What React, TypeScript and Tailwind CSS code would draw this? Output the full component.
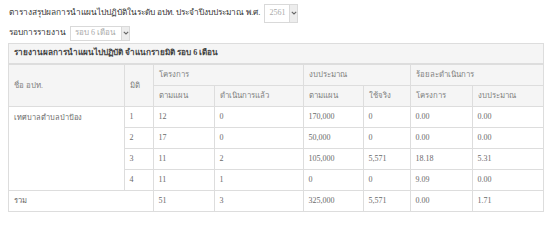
const rows = [
  ['1', '12', '0', '170,000', '0', '0.00', '0.00'],
  ['2', '17', '0', '50,000', '0', '0.00', '0.00'],
  ['3', '11', '2', '105,000', '5,571', '18.18', '5.31'],
  ['4', '11', '1', '0', '0', '9.09', '0.00'],
]

function Chevron() {
  return (
    <svg width="6" height="4" viewBox="0 0 6 4" className="block">
      <path d="M0.8 0.8 L3 3 L5.2 0.8" fill="none" stroke="#666" strokeWidth="1.1" />
    </svg>
  )
}

function Select({ label, width, height }: { label: string; width: string; height: string }) {
  return (
    <div className={`flex border border-[#d9d9d9] bg-white ${width} ${height}`}>
      <span className="flex-1 min-w-0 flex items-center pl-[4px] text-[#aaa] whitespace-nowrap">{label}</span>
      <span className="w-[8px] shrink-0 flex items-center justify-center bg-[#ededed] border-l border-[#d9d9d9]">
        <Chevron />
      </span>
    </div>
  )
}

const th = 'border border-[#dddddd] px-[5px] h-[21px] text-left font-normal text-[#808080] align-middle whitespace-nowrap'
const td = 'border border-[#dddddd] px-[5px] h-[21px] text-left text-[#6a6a6a] align-middle whitespace-nowrap'

export default function App() {
  return (
    <div className="w-[550px] h-[245px] bg-white px-2 pt-[3px] text-[8px] leading-none text-[#333] font-['Liberation_Serif',Tahoma,serif]">
      <div className="flex items-center gap-[4px] h-[20px]">
        <span className="text-[8.3px] pl-px">ตารางสรุปผลการนำแผนไปปฏิบัติในระดับ อปท. ประจำปีงบประมาณ พ.ศ.</span>
        <Select label="2561" width="w-[34px]" height="h-[19px]" />
      </div>
      <div className="flex items-center gap-[4px] h-[16px] mt-[2px]">
        <span className="text-[8.3px] pl-px">รอบการรายงาน</span>
        <Select label="รอบ 6 เดือน" width="w-[60px]" height="h-[15px]" />
      </div>
      <div className="mt-[2px] w-[536px] border border-[#dddddd]">
        <div className="h-[20px] flex items-center px-[5px] bg-[#f5f5f5] border-b border-[#dddddd] text-[#444] text-[8.2px] font-semibold">
          รายงานผลการนำแผนไปปฏิบัติ จำแนกรายมิติ รอบ 6 เดือน
        </div>
        <table className="w-full border-collapse table-fixed -mb-px">
          <colgroup>
            <col className="w-[115px]" />
            <col className="w-[29px]" />
            <col className="w-[61px]" />
            <col className="w-[89px]" />
            <col className="w-[60px]" />
            <col className="w-[47px]" />
            <col className="w-[62px]" />
            <col />
          </colgroup>
          <thead className="bg-[#f5f5f5] text-[7.8px]">
            <tr>
              <th rowSpan={2} className={`${th} border-l-0`}>ชื่อ อปท.</th>
              <th rowSpan={2} className={th}>มิติ</th>
              <th colSpan={2} className={th}>โครงการ</th>
              <th colSpan={2} className={th}>งบประมาณ</th>
              <th colSpan={2} className={`${th} border-r-0`}>ร้อยละดำเนินการ</th>
            </tr>
            <tr>
              <th className={th}>ตามแผน</th>
              <th className={th}>ดำเนินการแล้ว</th>
              <th className={th}>ตามแผน</th>
              <th className={th}>ใช้จริง</th>
              <th className={th}>โครงการ</th>
              <th className={`${th} border-r-0`}>งบประมาณ</th>
            </tr>
          </thead>
          <tbody>
            {rows.map((r, i) => (
              <tr key={i}>
                {i === 0 && (
                  <td rowSpan={4} className={`${td} border-l-0 align-top pt-[7px] text-[7.4px]`}>
                    เทศบาลตำบลป่าป้อง
                  </td>
                )}
                {r.map((c, j) => (
                  <td key={j} className={`${td} ${j === r.length - 1 ? 'border-r-0' : ''}`}>
                    {c}
                  </td>
                ))}
              </tr>
            ))}
            <tr>
              <td colSpan={2} className={`${td} border-l-0 text-[7.6px]`}>รวม</td>
              <td className={td}>51</td>
              <td className={td}>3</td>
              <td className={td}>325,000</td>
              <td className={td}>5,571</td>
              <td className={td}>0.00</td>
              <td className={`${td} border-r-0`}>1.71</td>
            </tr>
          </tbody>
        </table>
      </div>
    </div>
  )
}
